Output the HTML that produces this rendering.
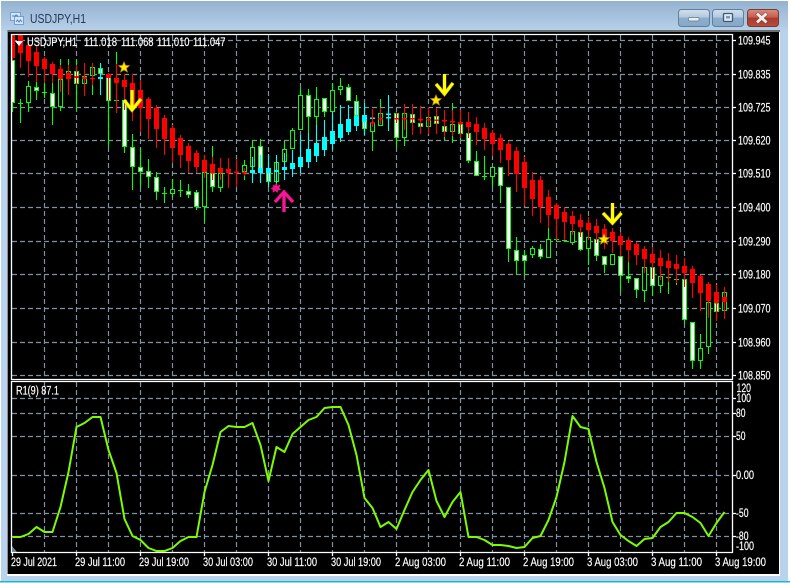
<!DOCTYPE html>
<html><head><meta charset="utf-8"><title>USDJPY,H1</title>
<style>
html,body{margin:0;padding:0;background:#fff;width:790px;height:583px;overflow:hidden}
svg{display:block}
text{font-family:"Liberation Sans",sans-serif;font-size:11.5px;fill:#fff;stroke:#fff;stroke-width:.18px}
</style></head><body>
<svg width="790" height="583" viewBox="0 0 790 583" xmlns="http://www.w3.org/2000/svg">
<defs>
<linearGradient id="tb" x1="0" y1="0" x2="0" y2="1"><stop offset="0" stop-color="#96b4d1"/><stop offset=".06" stop-color="#96b4d1"/><stop offset="1" stop-color="#b8d1e9"/></linearGradient>
<linearGradient id="bt" x1="0" y1="0" x2="0" y2="1"><stop offset="0" stop-color="#d3e0ec"/><stop offset=".45" stop-color="#b4c9de"/><stop offset=".5" stop-color="#8eadcb"/><stop offset="1" stop-color="#86a9ca"/></linearGradient>
<linearGradient id="bc" x1="0" y1="0" x2="0" y2="1"><stop offset="0" stop-color="#d98c80"/><stop offset=".45" stop-color="#c55f50"/><stop offset=".5" stop-color="#ac3a2b"/><stop offset="1" stop-color="#b54c3a"/></linearGradient>
<clipPath id="cm"><rect x="12" y="35" width="720" height="344"/></clipPath>
</defs>

<!-- window frame -->
<rect x="0" y="0" width="790" height="583" fill="#fff"/>
<rect x="1" y="1" width="787" height="581" fill="#b9d3ec"/>
<rect x="1" y="1" width="787" height="30" fill="url(#tb)"/>
<rect x="0" y="581" width="790" height="1.5" fill="#19b6cc"/>
<rect x="7" y="30" width="773" height="546" fill="#fff"/>
<rect x="7" y="30" width="773" height="2" fill="#6a6f74"/>
<rect x="7" y="30" width="1" height="544" fill="#8b9097"/>
<rect x="8" y="32" width="771" height="542" fill="#000"/>

<!-- title -->
<g fill="#d6e6f6" stroke="#6f9fd6" stroke-width="1">
<rect x="10.5" y="12.5" width="10" height="8"/>
<rect x="14.5" y="16.5" width="9" height="8"/>
</g>
<path d="M12 16h3l1-1 2 1M16 22l1.500-2 1.500 2 1.500-2 1.500 2" fill="none" stroke="#4f82bd" stroke-width="1"/>
<text x="30" y="23" textLength="56" lengthAdjust="spacingAndGlyphs" style="font-size:13px;fill:#26395a;stroke:none">USDJPY,H1</text>

<!-- buttons -->
<rect x="678.500" y="9.500" width="31" height="17" rx="3" fill="url(#bt)" stroke="#5f7f9e"/>
<rect x="712.500" y="9.500" width="31" height="17" rx="3" fill="url(#bt)" stroke="#5f7f9e"/>
<rect x="747.500" y="9.500" width="31" height="17" rx="3" fill="url(#bc)" stroke="#7d3a30"/>
<rect x="688.500" y="17.500" width="10.500" height="3.500" rx="1" fill="#e9eef3" stroke="#5f7891" stroke-width=".7"/>
<rect x="723.500" y="13.500" width="9" height="8" rx="1" fill="#dfe8f0" stroke="#3f5a75" stroke-width="1.300"/>
<rect x="726" y="16" width="4" height="2.500" fill="#7d99b5"/>
<path d="M758 14.500l7.500 7M765.500 14.500l-7.500 7" stroke="#6d2f26" stroke-width="4.200" fill="none" stroke-linecap="square" opacity=".5"/>
<path d="M758 14.500l7.500 7M765.500 14.500l-7.500 7" stroke="#f2efee" stroke-width="2.800" fill="none" stroke-linecap="square"/>

<!-- grid -->
<g stroke="#7f90a2" stroke-width="1.200" stroke-dasharray="5 3" fill="none">
<path d="M12 40.500H732M12 74.500H732M12 107.500H732M12 140.500H732M12 173.500H732M12 207.500H732M12 241.500H732M12 274.500H732M12 308.500H732M12 342.500H732M12 375.500H732"/>
<path d="M44.500 35V379M76.500 35V379M108.500 35V379M140.500 35V379M172.500 35V379M204.500 35V379M236.500 35V379M268.500 35V379M300.500 35V379M332.500 35V379M364.500 35V379M396.500 35V379M428.500 35V379M460.500 35V379M492.500 35V379M524.500 35V379M556.500 35V379M588.500 35V379M620.500 35V379M652.500 35V379M684.500 35V379M716.500 35V379"/>
<path d="M12 398.500H732M12 413.500H732M12 436.500H732M12 475.500H732M12 513.500H732M12 536.500H732"/>
<path d="M44.500 382V552M76.500 382V552M108.500 382V552M140.500 382V552M172.500 382V552M204.500 382V552M236.500 382V552M268.500 382V552M300.500 382V552M332.500 382V552M364.500 382V552M396.500 382V552M428.500 382V552M460.500 382V552M492.500 382V552M524.500 382V552M556.500 382V552M588.500 382V552M620.500 382V552M652.500 382V552M684.500 382V552M716.500 382V552"/>
</g>

<!-- candles -->
<g clip-path="url(#cm)" fill="none">
<path stroke="#00ff00" stroke-width="1.100" d="M12.500 60V112M20.500 99V123M18 103.500h5M28.500 81V112M36.500 81V100M44.500 75V98M42 92.500h5M52.500 83V125M60.500 59V111M68.500 59V94M76.500 60V110M84.500 73V90M92.500 63V95M100.500 63V74M108.500 73V147M116.500 52V113M114 100.500h5M124.500 99V153M132.500 134V190M140.500 148V187M148.500 159V188M156.500 172V200M164.500 187V203M162 193.500h5M172.500 179V197M180.500 180V197M178 190.500h5M188.500 184V198M196.500 190V210M204.500 155V222M212.500 146V192M220.500 165V192M244.500 160V180M252.500 140V170M260.500 139V172M268.500 160V187M276.500 162V185M284.500 141V150M292.500 128V149M300.500 88V130M308.500 89V133M316.500 87V126M324.500 98V117M332.500 83V112M340.500 78V95M348.500 84V101M356.500 95V116M364.500 118V135M372.500 122V151M380.500 99V126M396.500 113V148M404.500 113V146M412.500 114V123M420.500 123V127M428.500 117V127M436.500 116V124M444.500 126V140M452.500 103V143M460.500 118V140M468.500 133V163M476.500 151V176M484.500 156V180M482 176.500h5M492.500 167V187M500.500 167V203M508.500 187V262M516.500 237V274M524.500 250V276M532.500 246V258M540.500 244V259M548.500 228V258M556.500 232V242M554 239.500h5M564.500 233V242M562 240.500h5M572.500 231V245M580.500 232V251M588.500 237V265M596.500 239V261M604.500 256V273M612.500 254V265M620.500 256V292M628.500 262V283M636.500 278V298M644.500 267V302M652.500 267V296M660.500 276V293M668.500 273V294M666 277.500h5M676.500 275V285M674 279.500h5M684.500 279V324M692.500 322V369M700.500 334V369M708.500 302V354M716.500 303V312M724.500 292V311"/>
<!-- outer bodies -->
<path stroke="#00ff00" stroke-width="5" d="M12.500 60V103M36.500 87V91M52.500 93V107M76.500 71V84M100.500 68V74M108.500 74V101M124.500 100V147M132.500 147V167M140.500 167V172M148.500 171V177M156.500 177V192M188.500 191V195M196.500 192V207M212.500 173V187M260.500 146V171M268.500 170V182M308.500 95V117M324.500 98V112M348.500 87V101M356.500 101V116M364.500 121V129M396.500 113V138M412.500 114V123M420.500 123V127M436.500 116V124M444.500 126V132M460.500 124V134M468.500 133V161M476.500 161V176M500.500 167V186M508.500 187V249M516.500 250V261M524.500 255V261M540.500 249V257M580.500 232V250M596.500 239V256M604.500 256V265M620.500 256V276M628.500 276V279M636.500 278V290M652.500 267V286M684.500 279V320M692.500 322V361M716.500 303V312M28.500 86V103M60.500 79V107M68.500 71V79M84.500 76V84M92.500 67V76M172.500 189V194M204.500 172V207M220.500 173V188M244.500 165V172M252.500 147V167M276.500 162V182M284.500 149V162M292.500 130V149M300.500 95V130M316.500 99V117M332.500 90V112M340.500 86V90M372.500 122V132M380.500 113V126M404.500 113V138M428.500 117V127M452.500 124V132M492.500 167V177M532.500 248V255M548.500 239V258M572.500 231V243M588.500 237V249M612.500 254V265M644.500 267V291M660.500 276V286M700.500 348V361M708.500 302V347M724.500 292V311"/>
<!-- white inner -->
<path stroke="#fff" stroke-width="3" d="M12.500 61V102M36.500 88V90M52.500 94V106M76.500 72V83M100.500 69V73M108.500 75V100M124.500 101V146M132.500 148V166M140.500 168V171M148.500 172V176M156.500 178V191M188.500 192V194M196.500 193V206M212.500 174V186M260.500 147V170M268.500 171V181M308.500 96V116M324.500 99V111M348.500 88V100M356.500 102V115M364.500 122V128M396.500 114V137M412.500 115V122M420.500 124V126M436.500 117V123M444.500 127V131M460.500 125V133M468.500 134V160M476.500 162V175M500.500 168V185M508.500 188V248M516.500 251V260M524.500 256V260M540.500 250V256M580.500 233V249M596.500 240V255M604.500 257V264M620.500 257V275M628.500 277V278M636.500 279V289M652.500 268V285M684.500 280V319M692.500 323V360M716.500 304V311"/>
<!-- black inner -->
<path stroke="#000" stroke-width="3" d="M28.500 87V102M60.500 80V106M68.500 72V78M84.500 77V83M92.500 68V75M172.500 190V193M204.500 173V206M220.500 174V187M244.500 166V171M252.500 148V166M276.500 163V181M284.500 150V161M292.500 131V148M300.500 96V129M316.500 100V116M332.500 91V111M340.500 87V89M372.500 123V131M380.500 114V125M404.500 114V137M428.500 118V126M452.500 125V131M492.500 168V176M532.500 249V254M548.500 240V257M572.500 232V242M588.500 238V248M612.500 255V264M644.500 268V290M660.500 277V285M700.500 349V360M708.500 303V346M724.500 293V310"/>
<!-- cyan candles -->
<path stroke="#00ffff" stroke-width="1.100" d="M100.500 63V95M252.500 157V183M260.500 155V183M268.500 154V187M276.500 155V183M284.500 153V180M292.500 150V177M300.500 135V173M308.500 133V168M316.500 125V162M324.500 120V156M332.500 112V150M340.500 105V142M348.500 105V135M356.500 103V131M364.500 103V135M388.500 95V131"/>
<path stroke="#00ffff" stroke-width="5" d="M100.500 77V79M252.500 170V173M260.500 168V173M268.500 168V173M276.500 170V172M284.500 167V170M292.500 163V169M300.500 157V167M308.500 149V162M316.500 143V156M324.500 137V150M332.500 131V144M340.500 124V138M348.500 119V132M356.500 116V126M364.500 115V122M372.500 117.500V119M388.500 113.500V115M388.500 117V118.500"/>
<!-- red candles -->
<path stroke="#ff0000" stroke-width="1.100" d="M12.500 34V60M20.500 35V68M28.500 45V77M36.500 45V82M44.500 57V83M52.500 62V83M60.500 65V92M68.500 65V95M76.500 65V85M84.500 63V96M92.500 63V85M108.500 73V100M116.500 64V113M124.500 74V110M132.500 74V121M140.500 80V132M148.500 97V139M156.500 105V148M164.500 115V155M172.500 125V163M180.500 135V168M188.500 143V173M196.500 150V173M204.500 155V178M212.500 157V180M220.500 158V180M228.500 158V188M236.500 159V187M244.500 168V176M372.500 109V127M380.500 108V124M396.500 112V123M404.500 104V130M412.500 104V135M420.500 106V134M428.500 107V134M436.500 108V134M444.500 110V137M452.500 110V136M460.500 110V138M468.500 112V138M476.500 117V145M484.500 123V150M492.500 130V156M500.500 134V163M508.500 141V176M516.500 147V192M524.500 157V206M532.500 172V216M540.500 176V223M548.500 190V228M556.500 203V240M564.500 207V240M572.500 211V235M580.500 214V237M588.500 217V240M596.500 219V243M604.500 224V249M612.500 228V253M620.500 232V256M628.500 237V262M636.500 242V265M644.500 246V273M652.500 247V279M660.500 250V280M668.500 253V282M676.500 255V283M684.500 258V287M692.500 266V298M700.500 275V311M708.500 282V318M716.500 285V321M724.500 287V319"/>
<path stroke="#ff0000" stroke-width="5" d="M12.500 35V58M20.500 35V53M28.500 45V61M36.500 52V66M44.500 59V69M52.500 64V74M60.500 69V79M68.500 73V79M76.500 76V78M84.500 77V79M92.500 78V79M108.500 74V78M116.500 78V83M124.500 80V87M132.500 83V107M140.500 90V108M148.500 99V119M156.500 108V129M164.500 118V139M172.500 128V148M180.500 138V155M188.500 146V161M196.500 153V167M204.500 160V172M212.500 164V173M220.500 168V173M228.500 169V173M236.500 171.500V173M244.500 172V173.500M372.500 122V123.500M380.500 118V119.500M396.500 118V119.500M404.500 118V119.500M412.500 118V119.500M420.500 119V120.500M428.500 119V120.500M436.500 119.500V121M444.500 120V121.500M452.500 121V122.500M460.500 122V124M468.500 122V127M476.500 124V132M484.500 128V139M492.500 133V144M500.500 138V150M508.500 144V160M516.500 151V174M524.500 162V188M532.500 180V199M540.500 180V207M548.500 197V215M556.500 205V219M564.500 212V222M572.500 216V224M580.500 220V227M588.500 223V230M596.500 226V233M604.500 229V238M612.500 232V241M620.500 236V245M628.500 240V250M636.500 244V255M644.500 249V259M652.500 254V263M660.500 258V266M668.500 261V268M676.500 264V269M684.500 266V273M692.500 269V283M700.500 276V293M708.500 284V301M716.500 292V303M724.500 297V302"/>
</g>

<!-- arrows & stars -->
<g fill="none" stroke="#b8a000" stroke-width="4" opacity=".55">
<path d="M132 90V108M124 100l8 10 9-11"/><path d="M444.500 74V92M436 84l8.500 10 8.500-11"/><path d="M612.500 203V221M603 213l9.500 10 9-10"/>
</g>
<g fill="none" stroke="#ffff00" stroke-width="3">
<path d="M132 90V108M124 100l8 10 9-11"/><path d="M444.500 74V92M436 84l8.500 10 8.500-11"/><path d="M612.500 203V221M603 213l9.500 10 9-10"/>
</g>
<g fill="none" stroke="#a0108c" stroke-width="3.800" opacity=".6">
<path d="M284 194V212M275 202l9-10 9 10"/>
</g>
<g fill="none" stroke="#ff1493" stroke-width="3">
<path d="M284 194V212M275 202l9-10 9 10"/>
</g>
<g fill="#ffee00" stroke="#c79000" stroke-width=".8">
<polygon points="124,62 125.500,65.400 129.300,65.700 126.400,68.200 127.300,71.900 124,69.900 120.700,71.900 121.600,68.200 118.700,65.700 122.500,65.400"/>
<polygon points="436,95 437.500,98.400 441.300,98.700 438.400,101.200 439.300,104.900 436,102.900 432.700,104.900 433.600,101.200 430.700,98.700 434.500,98.400"/>
<polygon points="604,234 605.500,237.400 609.300,237.700 606.400,240.200 607.300,243.900 604,241.900 600.700,243.900 601.600,240.200 598.700,237.700 602.500,237.400"/>
</g>
<polygon fill="#f0128c" points="276,183 277.400,185.600 280.500,184.800 279.300,187.800 281.200,189.800 278.300,190.300 277.300,193 275.500,191 272.800,192.800 272.800,189.800 270.800,188.200 273.300,187 272.800,184.500 275,185.500"/>

<!-- frame lines -->
<g stroke="#fff" stroke-width="1.300" fill="none">
<path d="M11.500 34.500H732.500V379.500H11.500Z"/>
<path d="M11.500 381.500H732.500V552.500H11.500Z"/>
<path d="M732 40.500h4M732 74.500h4M732 107.500h4M732 140.500h4M732 173.500h4M732 207.500h4M732 241.500h4M732 274.500h4M732 308.500h4M732 342.500h4M732 375.500h4"/>
<path d="M732 398.500h4M732 475.500h4M732 513.500h4M732 436.500h4M732 413.500h4M732 536.500h4"/>
<path d="M12.500 552v4M76.500 552v4M140.500 552v4M204.500 552v4M268.500 552v4M332.500 552v4M396.500 552v4M460.500 552v4M524.500 552v4M588.500 552v4M652.500 552v4M716.500 552v4"/>
</g>

<!-- indicator -->
<polygon points="12,546 17,552 12,552" fill="#778899"/>
<polyline fill="none" stroke="#7cfc00" stroke-width="2" stroke-linejoin="round" points="12.500,537 20.500,537 28.500,534 36.500,527 44.500,532 52.500,532 60.500,507 68.500,472 76.500,427 84.500,423 92.500,417 100.500,417 108.500,450 116.500,473 124.500,519 132.500,536 140.500,540 148.500,548 156.500,551 164.500,551 172.500,548 180.500,541 188.500,537 196.500,537 204.500,492 212.500,465 220.500,432 228.500,426 236.500,427 244.500,427 252.500,423 260.500,445 268.500,481 276.500,447 284.500,452 292.500,434 300.500,427 308.500,420 316.500,417 324.500,408 332.500,407 340.500,407 348.500,425 356.500,455 364.500,498 372.500,508 380.500,527 388.500,522 396.500,529 404.500,510 412.500,492 420.500,480 428.500,470 436.500,501 444.500,517 452.500,502 460.500,492 468.500,537 476.500,537 484.500,540 492.500,545 500.500,545 508.500,546 516.500,548 524.500,547 532.500,538 540.500,536 548.500,520 556.500,497 564.500,462 572.500,416 580.500,427 588.500,429 596.500,462 604.500,488 612.500,522 620.500,535 628.500,541 636.500,546 644.500,539 652.500,538 660.500,527 668.500,522 676.500,513 684.500,513 692.500,517 700.500,523 708.500,536 716.500,523 724.500,512"/>

<!-- corner triangle & header -->
<polygon points="15,41 23,41 19,46" fill="#fff"/>
<text x="27" y="46" textLength="50" lengthAdjust="spacingAndGlyphs">USDJPY,H1</text>
<text x="84" y="46" textLength="33" lengthAdjust="spacingAndGlyphs">111.018</text>
<text x="121" y="46" textLength="32.500" lengthAdjust="spacingAndGlyphs">111.068</text>
<text x="157" y="46" textLength="32.500" lengthAdjust="spacingAndGlyphs">111.010</text>
<text x="193" y="46" textLength="32.500" lengthAdjust="spacingAndGlyphs">111.047</text>
<text x="16" y="394.500" textLength="43" lengthAdjust="spacingAndGlyphs">R1(9) 87.1</text>

<!-- price labels -->
<text x="738" y="44.500" textLength="32.500" lengthAdjust="spacingAndGlyphs">109.945</text>
<text x="738" y="78.500" textLength="32.500" lengthAdjust="spacingAndGlyphs">109.835</text>
<text x="738" y="111.500" textLength="32.500" lengthAdjust="spacingAndGlyphs">109.725</text>
<text x="738" y="144.500" textLength="32.500" lengthAdjust="spacingAndGlyphs">109.620</text>
<text x="738" y="177.500" textLength="32.500" lengthAdjust="spacingAndGlyphs">109.510</text>
<text x="738" y="211.500" textLength="32.500" lengthAdjust="spacingAndGlyphs">109.400</text>
<text x="738" y="245.500" textLength="32.500" lengthAdjust="spacingAndGlyphs">109.290</text>
<text x="738" y="278.500" textLength="32.500" lengthAdjust="spacingAndGlyphs">109.180</text>
<text x="738" y="312.500" textLength="32.500" lengthAdjust="spacingAndGlyphs">109.070</text>
<text x="738" y="346.500" textLength="32.500" lengthAdjust="spacingAndGlyphs">108.960</text>
<text x="738" y="379.500" textLength="32.500" lengthAdjust="spacingAndGlyphs">108.850</text>

<!-- indicator labels -->
<text x="736.500" y="392" textLength="14.500" lengthAdjust="spacingAndGlyphs">120</text>
<text x="736.500" y="402" textLength="14.500" lengthAdjust="spacingAndGlyphs">100</text>
<text x="736" y="417" textLength="9.500" lengthAdjust="spacingAndGlyphs">80</text>
<text x="736" y="440" textLength="9.500" lengthAdjust="spacingAndGlyphs">50</text>
<text x="736" y="479" textLength="18" lengthAdjust="spacingAndGlyphs">0.00</text>
<text x="736" y="517" textLength="12.500" lengthAdjust="spacingAndGlyphs">-50</text>
<text x="736" y="540" textLength="12.500" lengthAdjust="spacingAndGlyphs">-80</text>
<text x="736" y="550" textLength="18" lengthAdjust="spacingAndGlyphs">-100</text>

<!-- time labels -->
<text x="11" y="566" textLength="46" lengthAdjust="spacingAndGlyphs">29 Jul 2021</text>
<text x="75" y="566" textLength="50" lengthAdjust="spacingAndGlyphs">29 Jul 11:00</text>
<text x="139" y="566" textLength="50" lengthAdjust="spacingAndGlyphs">29 Jul 19:00</text>
<text x="203" y="566" textLength="50" lengthAdjust="spacingAndGlyphs">30 Jul 03:00</text>
<text x="267" y="566" textLength="50" lengthAdjust="spacingAndGlyphs">30 Jul 11:00</text>
<text x="331" y="566" textLength="50" lengthAdjust="spacingAndGlyphs">30 Jul 19:00</text>
<text x="395" y="566" textLength="51" lengthAdjust="spacingAndGlyphs">2 Aug 03:00</text>
<text x="459" y="566" textLength="51" lengthAdjust="spacingAndGlyphs">2 Aug 11:00</text>
<text x="523" y="566" textLength="51" lengthAdjust="spacingAndGlyphs">2 Aug 19:00</text>
<text x="587" y="566" textLength="51" lengthAdjust="spacingAndGlyphs">3 Aug 03:00</text>
<text x="651" y="566" textLength="51" lengthAdjust="spacingAndGlyphs">3 Aug 11:00</text>
<text x="715" y="566" textLength="51" lengthAdjust="spacingAndGlyphs">3 Aug 19:00</text>
</svg>
</body></html>
